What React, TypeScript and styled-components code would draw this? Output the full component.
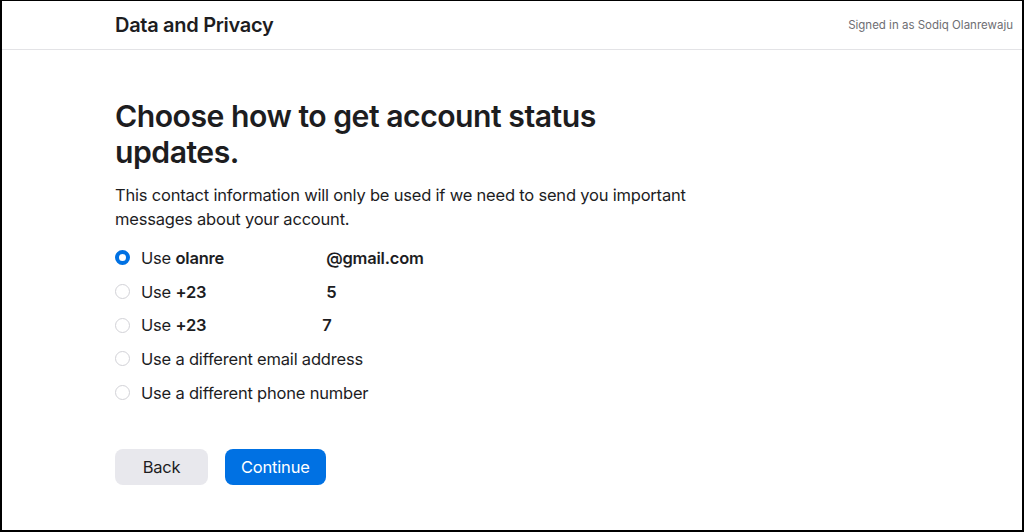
import React from 'react'
import styled, { createGlobalStyle } from 'styled-components'

const GlobalStyle = createGlobalStyle`
    html, body {
        margin: 0;
        padding: 0;
        background: #ffffff;
    }
    * {
        box-sizing: border-box;
    }
`

const Frame = styled.div`
    width: 1024px;
    height: 532px;
    border: 2px solid #000000;
    border-top-width: 1px;
    background: #ffffff;
    font-family: Inter, 'Noto Sans', sans-serif;
    color: #1d1d1f;
    display: flex;
    flex-direction: column;
    overflow: hidden;
`

const Header = styled.header`
    height: 49px;
    flex-shrink: 0;
    display: flex;
    align-items: center;
    justify-content: space-between;
    padding: 0 9px 0 113px;
    border-bottom: 1px solid #e3e3e6;
`

const HeaderTitle = styled.div`
    font-size: 20px;
    font-weight: 600;
    letter-spacing: -0.3px;
    color: #1d1d1f;
`

const SignedIn = styled.div`
    font-size: 11.5px;
    color: #6e6e73;
`

const Main = styled.main`
    padding: 48px 0 0 113px;
    display: flex;
    flex-direction: column;
`

const Heading = styled.h1`
    margin: 0;
    max-width: 600px;
    font-size: 30.2px;
    font-weight: 600;
    line-height: 36px;
    letter-spacing: -0.5px;
    color: #1d1d1f;
`

const Lead = styled.p`
    margin: 13px 0 0;
    max-width: 620px;
    font-size: 16.5px;
    line-height: 24px;
    letter-spacing: -0.2px;
`

const Options = styled.div`
    margin-top: 10px;
    display: flex;
    flex-direction: column;
`

const Option = styled.label`
    height: 33.7px;
    display: flex;
    align-items: center;
    gap: 11px;
    font-size: 16.5px;
    letter-spacing: -0.2px;
    cursor: pointer;
`

const Radio = styled.span<{ $checked?: boolean }>`
    width: 15px;
    height: 15px;
    border-radius: 50%;
    flex-shrink: 0;
    background: #ffffff;
    border: ${(p) => (p.$checked ? '4.5px solid #0071e3' : '1px solid #d2d2d7')};
`

const Strong = styled.b`
    font-weight: 600;
`

// blanked-out part of the contact value
const Redacted = styled.span<{ $w: number }>`
    display: inline-block;
    width: ${(p) => p.$w}px;
`

const Actions = styled.div`
    margin-top: 40px;
    display: flex;
    gap: 17px;
`

const Button = styled.button<{ $primary?: boolean }>`
    height: 36px;
    padding: 0 16px;
    min-width: 93px;
    border: none;
    border-radius: 8px;
    font-family: inherit;
    font-size: 16.5px;
    letter-spacing: -0.2px;
    background: ${(p) => (p.$primary ? '#0071e3' : '#e8e8ed')};
    color: ${(p) => (p.$primary ? '#ffffff' : '#1d1d1f')};
    cursor: pointer;
`

export default function App() {
    return (
        <>
            <GlobalStyle />
            <Frame>
                <Header>
                    <HeaderTitle>Data and Privacy</HeaderTitle>
                    <SignedIn>Signed in as Sodiq Olanrewaju</SignedIn>
                </Header>
                <Main>
                    <Heading>Choose how to get account status updates.</Heading>
                    <Lead>
                        This contact information will only be used if we need to send you
                        important messages about your account.
                    </Lead>
                    <Options>
                        <Option>
                            <Radio $checked />
                            <span>
                                Use <Strong>olanre</Strong>
                                <Redacted $w={102} />
                                <Strong>@gmail.com</Strong>
                            </span>
                        </Option>
                        <Option>
                            <Radio />
                            <span>
                                Use <Strong>+23</Strong>
                                <Redacted $w={120} />
                                <Strong>5</Strong>
                            </span>
                        </Option>
                        <Option>
                            <Radio />
                            <span>
                                Use <Strong>+23</Strong>
                                <Redacted $w={116} />
                                <Strong>7</Strong>
                            </span>
                        </Option>
                        <Option>
                            <Radio />
                            <span>Use a different email address</span>
                        </Option>
                        <Option>
                            <Radio />
                            <span>Use a different phone number</span>
                        </Option>
                    </Options>
                    <Actions>
                        <Button>Back</Button>
                        <Button $primary>Continue</Button>
                    </Actions>
                </Main>
            </Frame>
        </>
    )
}
